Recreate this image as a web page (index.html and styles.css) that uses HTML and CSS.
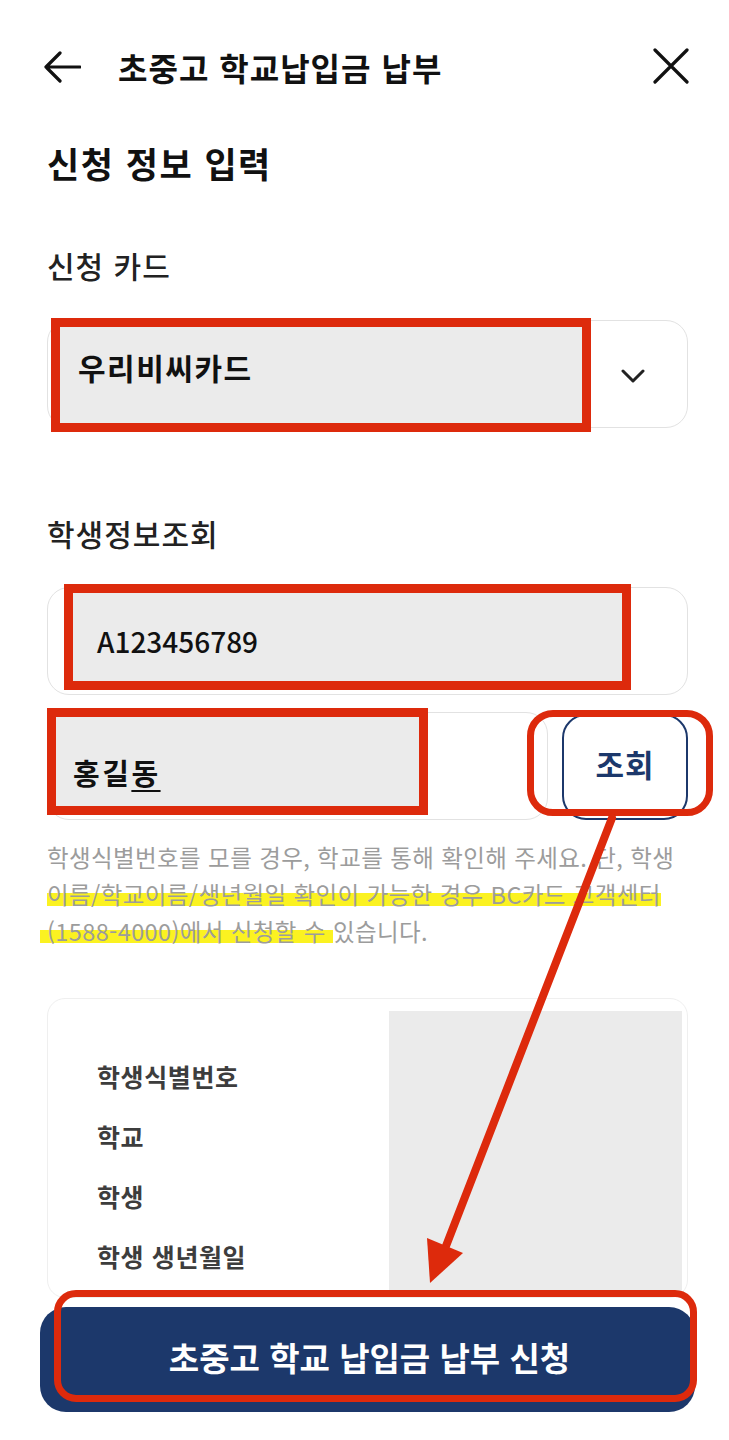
FILE: index.html
```html
<!DOCTYPE html>
<html lang="ko">
<head>
    <meta charset="UTF-8">
    <meta name="viewport" content="width=device-width, initial-scale=1.0">
    <title>초중고 학교납입금 납부</title>
    <link rel="stylesheet" href="styles.css">
</head>
<body>
    <div class="page">
        <header class="topbar">
            <button class="icon-btn back-btn" aria-label="뒤로">
                <svg width="37" height="32" viewBox="0 0 37 32"><path d="M36 16H2M16 2L2 16l14 14" fill="none" stroke="#111" stroke-width="3.2" stroke-linecap="round" stroke-linejoin="round"/></svg>
            </button>
            <h1 class="topbar-title">초중고 학교납입금 납부</h1>
            <button class="icon-btn close-btn" aria-label="닫기">
                <svg width="36" height="36" viewBox="0 0 36 36"><path d="M2 2l32 32M34 2L2 34" fill="none" stroke="#111" stroke-width="3.2" stroke-linecap="round"/></svg>
            </button>
        </header>

        <main class="form">
            <h2 class="form-title">신청 정보 입력</h2>

            <!-- 신청 카드 -->
            <section class="group">
                <h3 class="group-label label-card">신청 카드</h3>
                <div class="field select-box">
                    <span class="mark mark-card"></span>
                    <span class="field-value value-card">우리비씨카드</span>
                    <svg class="chevron" width="24" height="14" viewBox="0 0 24 14"><path d="M2 2l10 10L22 2" fill="none" stroke="#222" stroke-width="3" stroke-linecap="round" stroke-linejoin="round"/></svg>
                </div>
            </section>

            <!-- 학생정보조회 -->
            <section class="group">
                <h3 class="group-label label-student">학생정보조회</h3>
                <div class="field input-id">
                    <span class="mark mark-id"></span>
                    <span class="field-value value-id">A123456789</span>
                </div>
                <div class="search-row">
                    <div class="field input-name">
                        <span class="mark mark-name"></span>
                        <span class="field-value value-name">홍길<u>동</u></span>
                    </div>
                    <button class="search-btn">
                        조회
                        <span class="mark mark-search"></span>
                    </button>
                </div>
                <p class="help">
                    학생식별번호를 모를 경우, 학교를 통해 확인해 주세요. 단, 학생<br>
                    <span class="hl hl-a">이름/학교이름/생년월일 확인이 가능한 경우 BC카드 고객센터</span><br>
                    <span class="hl hl-b">(1588-4000)에서 신청할 수 </span>있습니다.
                </p>
            </section>

            <!-- 조회 결과 -->
            <section class="result-card">
                <ul class="result-labels">
                    <li>학생식별번호</li>
                    <li>학교</li>
                    <li>학생</li>
                    <li>학생 생년월일</li>
                </ul>
                <div class="result-values"></div>
            </section>
        </main>

        <div class="bottom-bar">
            <button class="submit-btn">초중고 학교 납입금 납부 신청</button>
            <span class="mark mark-submit"></span>
        </div>

        <svg class="arrow-mark" width="729" height="1440" viewBox="0 0 729 1440">
            <line x1="612" y1="818" x2="446" y2="1246" stroke="#dd2a0c" stroke-width="8" stroke-linecap="round"/>
            <polygon points="427,1238 463,1253 430,1283" fill="#dd2a0c"/>
        </svg>
    </div>
</body>
</html>
```

FILE: styles.css
```css
* {
    box-sizing: border-box;
}

body {
    margin: 0;
    background: #fff;
    font-family: "Noto Sans CJK KR", "Noto Sans", sans-serif;
    color: #111;
}

.page {
    position: relative;
    width: 729px;
    height: 1440px;
    overflow: hidden;
}

/* header */
.topbar {
    height: 134px;
    display: flex;
    align-items: center;
    padding: 0 40px 0 44px;
}

.icon-btn {
    background: none;
    border: none;
    padding: 0;
    display: flex;
    cursor: pointer;
}

.topbar-title {
    margin: 0 0 0 37px;
    flex: 1;
    font-size: 32px;
    font-weight: 700;
    letter-spacing: 1px;
    line-height: 40px;
}

.close-btn {
    margin-top: -2px;
}

/* form */
.form {
    padding: 0 41px 0 47px;
}

.form-title {
    margin: 5px 0 0;
    font-size: 35px;
    font-weight: 700;
    line-height: 48px;
    letter-spacing: 1.5px;
}

.group-label {
    margin: 0;
    font-size: 30px;
    font-weight: 500;
    line-height: 40px;
    color: #222;
    letter-spacing: 1px;
}

.label-card {
    margin-top: 58px;
}

.label-student {
    margin-top: 85px;
}

.field {
    position: relative;
    height: 108px;
    border: 1.5px solid #e2e2e2;
    border-radius: 22px;
    display: flex;
    align-items: center;
    background: #fff;
}

.field-value {
    position: relative;
    z-index: 1;
    font-weight: 700;
    color: #111;
}

.select-box {
    margin-top: 35px;
    justify-content: space-between;
    padding: 0 42px 0 30px;
}

.value-card {
    font-size: 30px;
    letter-spacing: 1.5px;
    margin-top: -14px;
}

.chevron {
    position: relative;
    z-index: 1;
    margin-top: 4px;
}

.input-id {
    margin-top: 34px;
    padding-left: 49px;
}

.value-id {
    font-size: 28px;
    font-weight: 500;
    letter-spacing: 0;
}

.search-row {
    display: flex;
    gap: 14px;
    margin-top: 17px;
}

.input-name {
    flex: 1;
    padding: 12px 0 0 25px;
}

.value-name {
    font-size: 29px;
    letter-spacing: 2.5px;
}

.value-name u {
    text-underline-offset: 5px;
    text-decoration-thickness: 2px;
}

.search-btn {
    position: relative;
    width: 126px;
    height: 106px;
    margin-top: 2px;
    border: 2px solid #1c386b;
    border-radius: 24px;
    background: #fff;
    color: #1c386b;
    font-family: inherit;
    font-size: 31px;
    font-weight: 700;
    letter-spacing: 1px;
    padding: 0 0 8px 0;
}

.help {
    margin: 19px 0 0;
    font-size: 23.5px;
    line-height: 37px;
    color: #9c9c9c;
    white-space: nowrap;
    letter-spacing: 0.4px;
}

.hl {
    background: linear-gradient(transparent 48%, #fbf221 48%, #fbf221 86%, transparent 86%);
}

.hl-b {
    margin-left: -7px;
    padding-left: 7px;
}

/* result card */
.result-card {
    margin-top: 48px;
    height: 300px;
    border: 1.5px solid #efefef;
    border-radius: 18px;
    display: grid;
    grid-template-columns: 1fr 293px;
    padding: 12px 5px 0 0;
}

.result-labels {
    list-style: none;
    margin: 0;
    padding: 35px 0 0 49px;
}

.result-labels li {
    font-size: 25px;
    font-weight: 700;
    line-height: 60px;
    color: #3d3d3d;
    letter-spacing: 0.6px;
}

.result-values {
    background: #ebebeb;
}

/* bottom button */
.bottom-bar {
    position: absolute;
    left: 40px;
    right: 34px;
    bottom: 28px;
}

.submit-btn {
    display: block;
    width: 100%;
    height: 105px;
    border: none;
    border-radius: 26px;
    background: #1c386b;
    color: #fff;
    font-family: inherit;
    font-size: 33px;
    font-weight: 700;
    letter-spacing: 0;
    padding: 0 0 6px 4px;
}

/* red annotation marks */
.mark {
    position: absolute;
    border: 9px solid #dd2a0c;
    pointer-events: none;
}

.mark-card {
    left: 3px;
    top: -3.5px;
    width: 540px;
    height: 114px;
    background: #ebebeb;
}

.mark-id {
    left: 16px;
    top: -4.5px;
    width: 567px;
    height: 106px;
    background: #ebebeb;
}

.mark-name {
    left: -1.5px;
    top: -5.5px;
    width: 381px;
    height: 107px;
    background: #ebebeb;
}

.mark-search {
    left: -37px;
    top: -6px;
    width: 186px;
    height: 106px;
    border-width: 7px;
    border-radius: 26px;
}

.mark-submit {
    left: 14px;
    top: -17px;
    width: 643px;
    height: 112px;
    border-width: 7px;
    border-radius: 22px;
}

.arrow-mark {
    position: absolute;
    left: 0;
    top: 0;
    pointer-events: none;
}
```
